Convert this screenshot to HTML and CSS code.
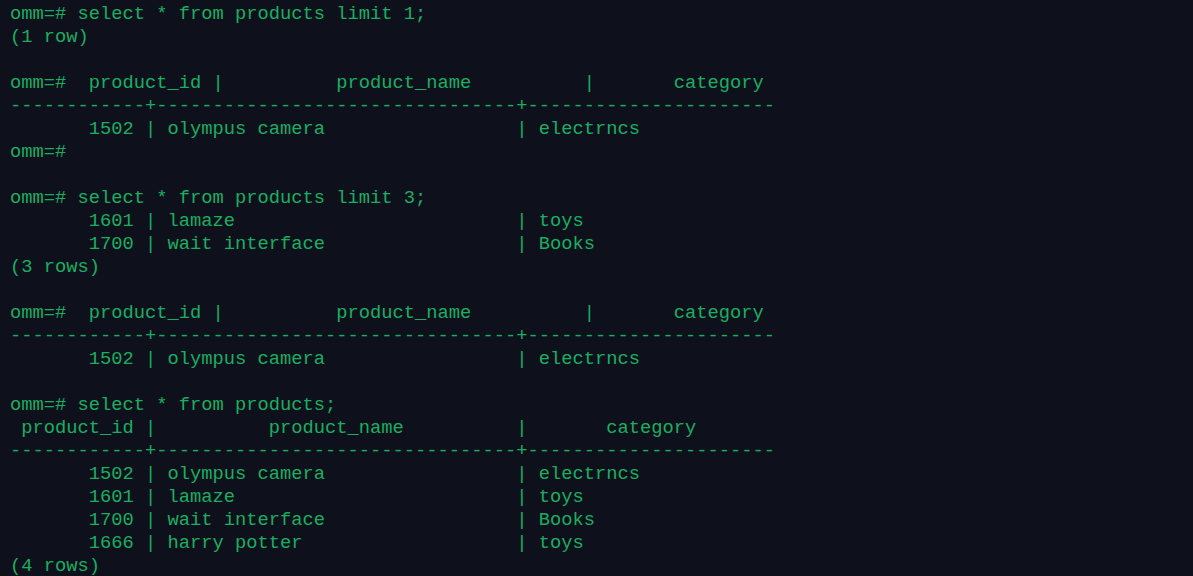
FILE: index.html
```html
<!DOCTYPE html>
<html>
<head>
<meta charset="utf-8">
<link rel="stylesheet" href="styles.css">
</head>
<body>
<pre class="term">omm=# select * from products limit 1;
(1 row)

omm=#  product_id |          product_name          |       category
------------+--------------------------------+----------------------
       1502 | olympus camera                 | electrncs
omm=#

omm=# select * from products limit 3;
       1601 | lamaze                         | toys
       1700 | wait interface                 | Books
(3 rows)

omm=#  product_id |          product_name          |       category
------------+--------------------------------+----------------------
       1502 | olympus camera                 | electrncs

omm=# select * from products;
 product_id |          product_name          |       category
------------+--------------------------------+----------------------
       1502 | olympus camera                 | electrncs
       1601 | lamaze                         | toys
       1700 | wait interface                 | Books
       1666 | harry potter                   | toys
(4 rows)</pre>
</body>
</html>
```

FILE: styles.css
```css
html, body {
  margin: 0;
  padding: 0;
  background: #0e111c;
  height: 100%;
  overflow: hidden;
}
.term {
  margin: 0;
  padding: 3px 0 0 10px;
  font-family: "Liberation Mono", "Courier New", monospace;
  font-size: 18.75px;
  line-height: 23px;
  color: #1cae60;
  white-space: pre;
}
```
